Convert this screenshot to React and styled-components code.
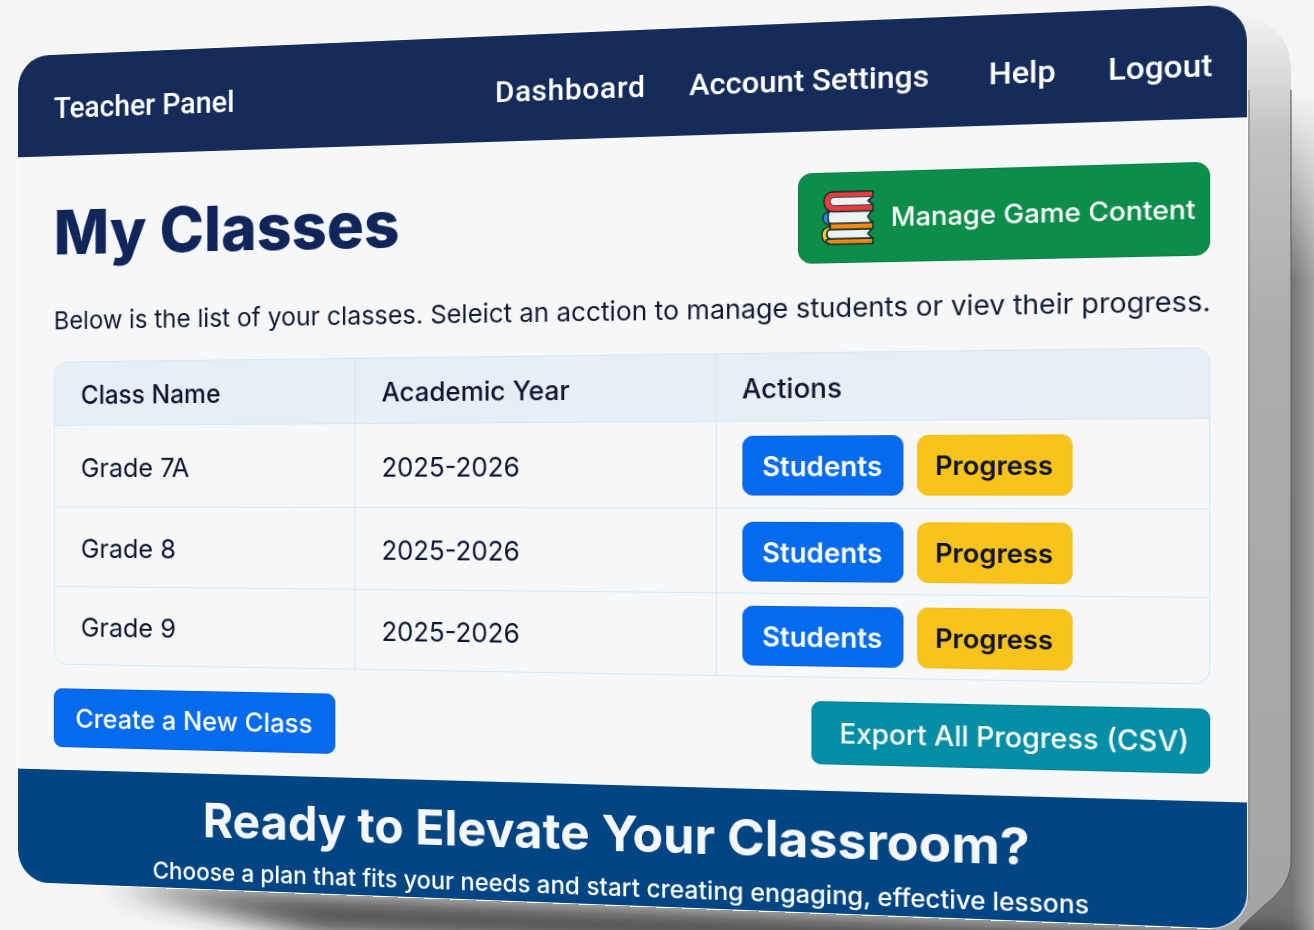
import React from 'react';
import styled, { createGlobalStyle } from 'styled-components';

const GlobalStyle = createGlobalStyle`
  html, body {
    margin: 0;
    padding: 0;
    background: #f5f5f5;
  }
  body {
    font-family: Inter, "Liberation Sans", sans-serif;
  }
  * {
    box-sizing: border-box;
  }
`;

const Stage = styled.div`
  position: relative;
  width: 1314px;
  height: 930px;
  overflow: hidden;
  background: #f5f5f5;
`;

const Backdrop = styled.svg`
  position: absolute;
  left: 0;
  top: 0;
`;

// the whole card is laid out flat at 1229x875, then projected on to the tilted quad
const Card = styled.div`
  position: relative;
  width: 1229px;
  height: 875px;
  display: flex;
  flex-direction: column;
  background: #f6f7f9;
  border-radius: 34px;
  overflow: hidden;
  box-shadow: 0 0 0 1px #ffffff;
  transform-origin: 0 0;
  transform: matrix3d(0.89046, -0.042915, 0, -0.00008785, 0, 0.94331, 0, 0, 0, 0, 1, 0, 18, 56.4, 0, 1);
`;

const NavBar = styled.header`
  height: 107px;
  flex: none;
  display: flex;
  align-items: center;
  padding: 6px 31px 0 40px;
  background: #152c5b;
  color: #fff;
  font-family: Roboto, sans-serif;
`;

const Brand = styled.div`
  font-size: 31px;
  font-weight: 500;
  margin-right: auto;
`;

const NavLink = styled.a`
  font-size: 30.2px;
  font-weight: 500;
  letter-spacing: ${p => p.$track || 0}px;
  margin-left: ${p => p.$gap}px;
  white-space: nowrap;
`;

const Main = styled.main`
  flex: 1;
  display: flex;
  flex-direction: column;
  padding: 41px 33px 0 40px;
`;

const TitleRow = styled.div`
  display: flex;
  justify-content: space-between;
  align-items: center;
  height: 89px;
`;

const Title = styled.h1`
  margin: 0 0 10px;
  font-size: 65px;
  font-weight: 800;
  color: #10265a;
`;

const ContentButton = styled.button`
  width: 384px;
  height: 89px;
  border: 1px solid #0a8043;
  border-radius: 13px;
  background: #0c8e4a;
  color: #fff;
  font: 500 25.7px Inter, sans-serif;
  display: flex;
  align-items: center;
  gap: 15px;
  padding: 0 0 0 21px;
  white-space: nowrap;
  svg {
    flex: none;
  }
`;

const Intro = styled.p`
  margin: 27px 0 0;
  font-size: 26.3px;
  line-height: 34px;
  color: #111a33;
  white-space: nowrap;
`;

const TableFrame = styled.div`
  margin-top: 26px;
  height: 320px;
  border: 1px solid #d3e8f4;
  border-radius: 14px;
  overflow: hidden;
`;

const Table = styled.table`
  width: 100%;
  height: 100%;
  border-collapse: collapse;
  table-layout: fixed;
`;

const HeadCell = styled.th`
  height: 66px;
  padding: 3px 0 0 ${p => p.$pad}px;
  text-align: left;
  font-size: 26.8px;
  font-weight: 500;
  color: #0d1630;
  background: #e8eef5;
  border-left: 1px solid #d3e8f4;
  border-bottom: 1px solid #d3e8f4;
  &:first-child {
    border-left: none;
  }
`;

const Cell = styled.td`
  height: ${p => p.$h}px;
  padding: 3px 0 0 ${p => p.$pad}px;
  font-size: ${p => p.$size || 27}px;
  color: #0d1630;
  border-left: 1px solid #d3e8f4;
  border-top: 1px solid #d3e8f4;
  &:first-child {
    border-left: none;
  }
`;

const Actions = styled.div`
  display: flex;
  gap: 13px;
`;

const SmallButton = styled.button`
  height: 59px;
  width: ${p => p.$w}px;
  padding: 0;
  border-radius: 10px;
  border: 1px solid ${p => p.$line};
  background: ${p => p.$bg};
  color: ${p => p.$fg};
  font: 600 ${p => p.$size}px Inter, sans-serif;
`;

const BottomRow = styled.div`
  margin-top: 23px;
  display: flex;
  justify-content: space-between;
  align-items: flex-start;
`;

const WideButton = styled.button`
  width: ${p => p.$w}px;
  height: 62px;
  margin-top: ${p => p.$top || 0}px;
  padding: 0 0 0 ${p => p.$left || 0}px;
  border-radius: 9px;
  border: 1px solid ${p => p.$line};
  background: ${p => p.$bg};
  color: #fff;
  font: 500 ${p => p.$size}px Inter, sans-serif;
  white-space: nowrap;
`;

const Footer = styled.footer`
  height: 120px;
  flex: none;
  padding: 17px 0 0 6px;
  display: flex;
  flex-direction: column;
  align-items: center;
  background: #004583;
  color: #fff;
`;

const FooterTitle = styled.h2`
  margin: 0;
  font-size: 49.8px;
  line-height: 62px;
  font-weight: 700;
  color: #f6f7fa;
  white-space: nowrap;
`;

const FooterText = styled.p`
  margin: 5px 0 0;
  font-size: 24.4px;
  font-weight: 500;
  line-height: 36px;
  white-space: nowrap;
`;

const BooksIcon = () => (
  <svg width="52" height="54" viewBox="0 0 52 54">
    <g stroke="#10302a" strokeWidth="1.4" strokeLinejoin="round">
      <path d="M8 35C3 36 1 39 1 43C1 48 4 52 9 52H50V47H10C7 47 6 45 6 43S7 39 10 38Z" fill="#f4c430" />
      <path d="M10 47H50V52.5H10C7 52.5 5 50 5 48Z" fill="#f28a13" />
      <path d="M9 38H49L45 42.5L49 47H10C7 47 6 45 6 42.5S7 38 9 38Z" fill="#f0f1f5" />
      <path d="M9 20C4 21 2 24 2 27C2 30 5 33 9 33Z" fill="#2c8be8" />
      <path d="M9 31H50V38H9Z" fill="#f28a13" />
      <path d="M9 20H49L45 26L49 32H10C8 32 7 29 7 26S8 20 9 20Z" fill="#f0f1f5" />
      <path d="M12 1H50V7L46 10.5L50 14V20.5H12C6 20.5 3 16 3 10.5C3 5 6 1 12 1Z" fill="#eb3b42" />
      <path d="M13 6.5H49L44.5 10.5L49 14.5H13C10.5 14.5 9 12.5 9 10.5S10.5 6.5 13 6.5Z" fill="#f0f1f5" strokeWidth="0.8" />
    </g>
  </svg>
);

const rows = [
  { name: 'Grade 7A', h: 86 },
  { name: 'Grade 8', h: 84 },
  { name: 'Grade 9', h: 82 },
];

export default function App() {
  return (
    <Stage>
      <GlobalStyle />
      <Backdrop width="1314" height="930" viewBox="0 0 1314 930">
        <defs>
          <linearGradient id="wall" x1="0" y1="0" x2="0" y2="1">
            <stop offset="0" stopColor="#f7f7f7" />
            <stop offset="0.06" stopColor="#e0e0e0" />
            <stop offset="0.14" stopColor="#c2c2c2" />
            <stop offset="0.35" stopColor="#adadad" />
            <stop offset="1" stopColor="#a4a4a4" />
          </linearGradient>
          <linearGradient id="sideShade" gradientUnits="userSpaceOnUse" x1="1291" y1="0" x2="1314" y2="0">
            <stop offset="0" stopColor="#757575" />
            <stop offset="1" stopColor="#a2a2a2" />
          </linearGradient>
          <linearGradient id="sideFade" x1="0" y1="0" x2="0" y2="1">
            <stop offset="0.1" stopColor="#fff" stopOpacity="0" />
            <stop offset="0.3" stopColor="#fff" stopOpacity="1" />
          </linearGradient>
          <mask id="sideMask">
            <rect x="1230" y="0" width="84" height="930" fill="url(#sideFade)" />
          </mask>
          <filter id="soft" x="-20%" y="-100%" width="140%" height="300%">
            <feGaussianBlur stdDeviation="13" />
          </filter>
        </defs>
        <rect x="1230" y="0" width="84" height="930" fill="url(#sideShade)" mask="url(#sideMask)" />
        <path d="M110 886L1300 930L1300 975L320 935Z" fill="#333" opacity="0.85" filter="url(#soft)" />
        <path d="M1225 5L1262 22C1280 30 1291 45 1291 72V860C1291 880 1280 893 1265 905L1238 930H1200V5Z" fill="url(#wall)" />
        <path d="M1291 90V860C1291 880 1280 893 1265 905L1240 928" fill="none" stroke="#666" strokeWidth="1.2" />
        <path d="M1249 90V900" fill="none" stroke="#8a8a8a" strokeWidth="1.2" />
      </Backdrop>
      <Card>
        <NavBar>
          <Brand>Teacher Panel</Brand>
          <NavLink $gap={0} $track={0.65}>Dashboard</NavLink>
          <NavLink $gap={43}>Account Settings</NavLink>
          <NavLink $gap={56}>Help</NavLink>
          <NavLink $gap={48}>Logout</NavLink>
        </NavBar>
        <Main>
          <TitleRow>
            <Title>My Classes</Title>
            <ContentButton>
              <BooksIcon />
              Manage Game Content
            </ContentButton>
          </TitleRow>
          <Intro>Below is the list of your classes. Seleict an acction to manage students or viev their progress.</Intro>
          <TableFrame>
            <Table>
              <colgroup>
                <col width="324" />
                <col width="367" />
                <col />
              </colgroup>
              <thead>
                <tr>
                  <HeadCell $pad={29}>Class Name</HeadCell>
                  <HeadCell $pad={28}>Academic Year</HeadCell>
                  <HeadCell $pad={25}>Actions</HeadCell>
                </tr>
              </thead>
              <tbody>
                {rows.map(r => (
                  <tr key={r.name}>
                    <Cell $h={r.h} $pad={29} $size={27.6}>{r.name}</Cell>
                    <Cell $h={r.h} $pad={28} $size={26.6}>2025-2026</Cell>
                    <Cell $h={r.h} $pad={25}>
                      <Actions>
                        <SmallButton $w={155} $size={26.7} $bg="#046bee" $line="#0a5fd8" $fg="#fff">Students</SmallButton>
                        <SmallButton $w={145} $size={25.5} $bg="#f8c41c" $line="#f3bb12" $fg="#0c1233">Progress</SmallButton>
                      </Actions>
                    </Cell>
                  </tr>
                ))}
              </tbody>
            </Table>
          </TableFrame>
          <BottomRow>
            <WideButton $w={305} $top={2} $size={27.5} $bg="#046bee" $line="#0a5fd8">Create a New Class</WideButton>
            <WideButton $w={371} $left={8} $size={26.6} $bg="#028fa5" $line="#027f94">Export All Progress (CSV)</WideButton>
          </BottomRow>
        </Main>
        <Footer>
          <FooterTitle>Ready to Elevate Your Classroom?</FooterTitle>
          <FooterText>Choose a plan that fits your needs and start creating engaging, effective lessons</FooterText>
        </Footer>
      </Card>
    </Stage>
  );
}
